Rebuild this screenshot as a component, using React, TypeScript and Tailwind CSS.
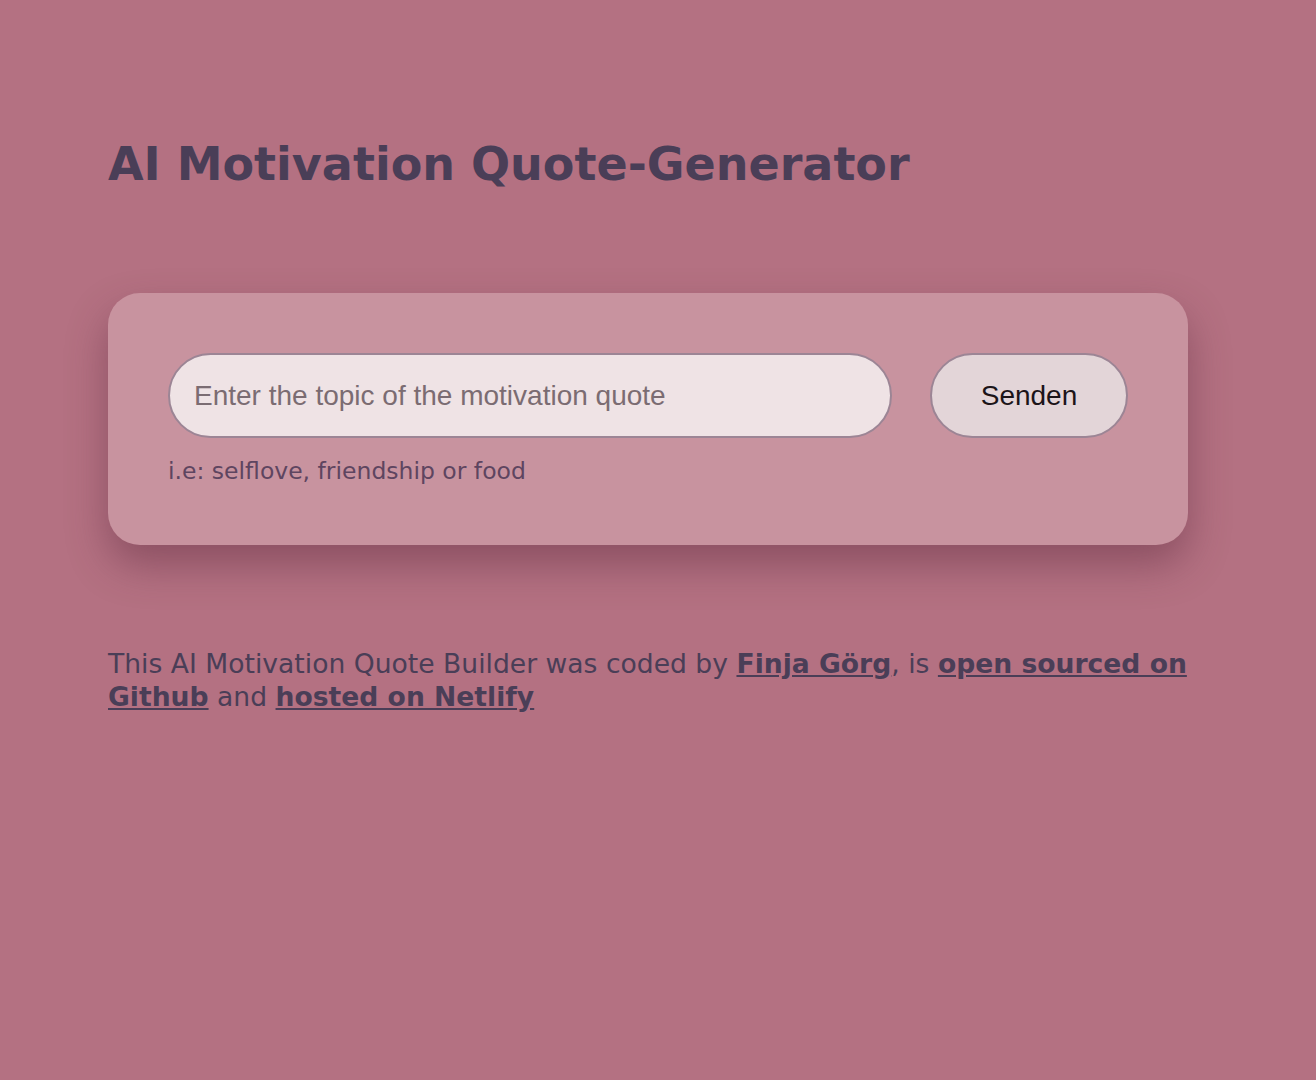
export default function App() {
  return (
    <div className="min-h-[1080px] w-full bg-[#b47182] font-['DejaVu_Sans',sans-serif] text-[#4a3e57]">
      <div className="ml-[108px] w-[1080px] pt-[134px]">
        {/* Title */}
        <h1 className="text-[46px] font-bold leading-[60px]">AI Motivation Quote-Generator</h1>

        {/* Card */}
        <div className="mt-[99px] rounded-[32px] bg-[#c8939f] px-[60px] pt-[60px] pb-[58px] shadow-[0_20px_40px_rgba(90,40,60,0.45)]">
          <div className="flex gap-[38px]">
            <input
              type="text"
              placeholder="Enter the topic of the motivation quote"
              className="h-[85px] min-w-0 flex-1 rounded-full border-2 border-[#9c8595] bg-[#efe3e5] px-[24px] font-['Liberation_Sans',Arial,sans-serif] text-[28px] text-[#1a1a1a] outline-none placeholder:text-[#7b6c72]"
            />
            <button className="h-[85px] w-[198px] shrink-0 rounded-full border-2 border-[#9c8595] bg-[#e3d5d8] font-['Liberation_Sans',Arial,sans-serif] text-[28px] text-[#1c1418]">
              Senden
            </button>
          </div>
          <p className="mt-[17px] text-[23.5px] leading-[32px] text-[#5e4560]">i.e: selflove, friendship or food</p>
        </div>

        {/* Footer */}
        <p className="mt-[102px] text-[26.6px] leading-[33px]">
          This AI Motivation Quote Builder was coded by{' '}
          <a href="#" className="font-bold underline">Finja Görg</a>, is{' '}
          <a href="#" className="font-bold underline">open sourced on Github</a> and{' '}
          <a href="#" className="font-bold underline">hosted on Netlify</a>
        </p>
      </div>
    </div>
  )
}
